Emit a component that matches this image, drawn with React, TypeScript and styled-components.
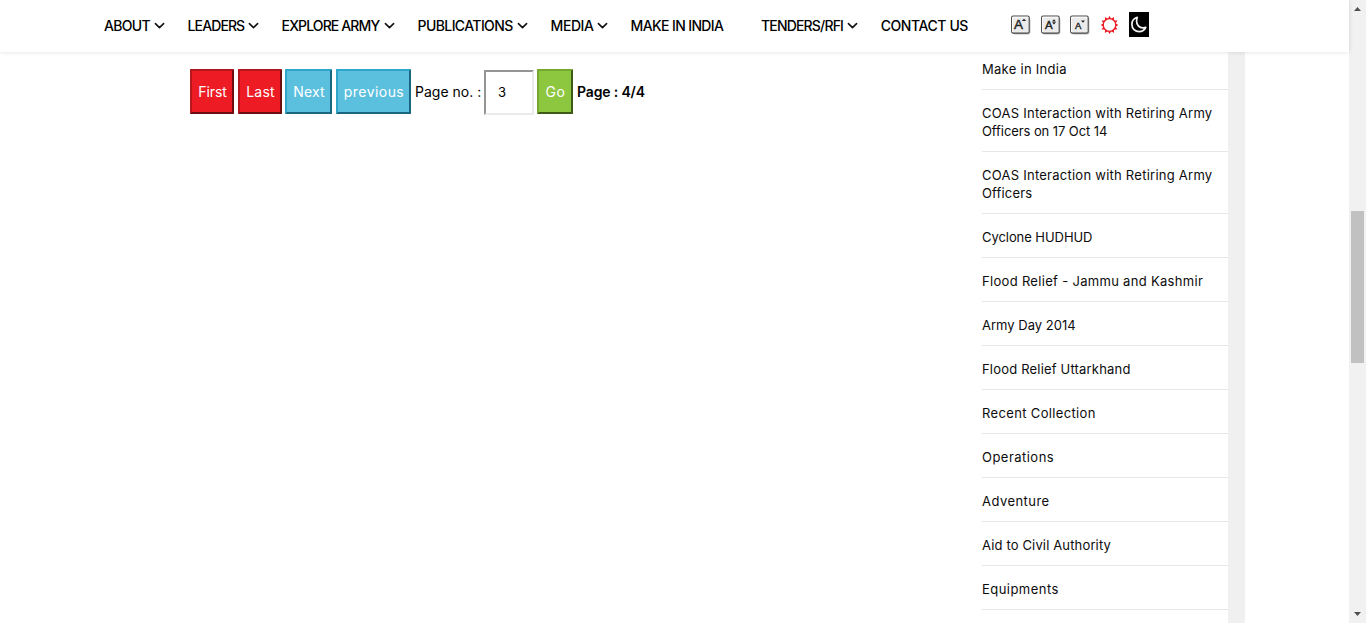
import React from "react";
import styled, { createGlobalStyle } from "styled-components";

const GlobalStyle = createGlobalStyle`
  * { box-sizing: border-box; }
  body { margin: 0; background: #fff; color: #000; font-family: Inter, "Liberation Sans", sans-serif; overflow: hidden; }
`;

const Window = styled.div`
  display: flex;
  height: 623px;
  overflow: hidden;
`;

const Page = styled.div`
  display: flex;
  flex-direction: column;
  width: 1349px;
`;

const Header = styled.header`
  position: relative;
  z-index: 1;
  display: flex;
  align-items: center;
  flex: none;
  height: 52px;
  padding-left: 104px;
  background: #fff;
  box-shadow: 0 0 5px rgba(0, 0, 0, 0.13);
`;

const Nav = styled.nav`
  display: flex;
  width: 907px;
`;

const NavItem = styled.a<{ $slot: number }>`
  display: flex;
  align-items: center;
  flex: none;
  width: ${(p) => p.$slot}px;
  color: #000;
  text-decoration: none;
`;

const NavLabel = styled.span<{ $width: number; $spacing: number }>`
  width: ${(p) => p.$width}px;
  font-size: 14px;
  font-weight: 500;
  line-height: 20px;
  letter-spacing: ${(p) => p.$spacing}px;
  white-space: nowrap;
`;

const Tools = styled.div`
  display: flex;
  align-items: center;
  height: 26px;
  margin-top: -3px;
`;

const ToolSlot = styled.span<{ $slot: number }>`
  display: flex;
  width: ${(p) => p.$slot}px;
`;

const Body = styled.main`
  display: flex;
  flex: 1;
  overflow: hidden;
`;

const Content = styled.section`
  width: 982px;
  padding: 17px 0 0 190px;
`;

const Pager = styled.form`
  display: flex;
  align-items: flex-start;
  font-size: 14px;
  line-height: 20px;
`;

const tones = {
  red: { fill: "#ed1c24", light: "#b5171d", dark: "#6b0d11" },
  blue: { fill: "#5bc0de", light: "#2fa5c9", dark: "#1a6580" },
  green: { fill: "#8dc63f", light: "#76a82f", dark: "#3f5a18" },
};

const PagerButton = styled.button<{ $tone: keyof typeof tones; $width: number; $gap: number; $spacing: number }>`
  width: ${(p) => p.$width}px;
  height: 45px;
  margin: 0 ${(p) => p.$gap}px 0 0;
  padding: 1px 0 0 1px;
  border: 2px solid;
  border-color: ${(p) => `${tones[p.$tone].light} ${tones[p.$tone].dark} ${tones[p.$tone].dark} ${tones[p.$tone].light}`};
  border-radius: 1px;
  background: ${(p) => tones[p.$tone].fill};
  color: #fff;
  font: 400 14px/20px Inter, sans-serif;
  letter-spacing: ${(p) => p.$spacing}px;
  white-space: nowrap;
`;

const PagerLabel = styled.label`
  width: 69px;
  margin-top: 13px;
  white-space: nowrap;
`;

const PageInput = styled.input`
  width: 50px;
  height: 45px;
  margin: 1px 3px 0 0;
  padding: 0 12px 1px;
  border: 2px solid;
  border-color: #949494 #ebebeb #ebebeb #949494;
  border-radius: 0;
  outline: 0;
  font: 400 13px/20px Inter, sans-serif;
`;

const PageCount = styled.strong`
  margin-top: 13px;
  font-weight: 600;
  letter-spacing: -0.15px;
`;

const Sidebar = styled.aside`
  width: 246px;
  margin-top: -6px;
`;

const AlbumLink = styled.a`
  display: block;
  padding: 14px 0 11px;
  border-bottom: 1px solid #e6e6e6;
  color: #0c0c0c;
  font-size: 13px;
  line-height: 18px;
  text-decoration: none;
`;

const AlbumLine = styled.span<{ $spacing: number }>`
  display: block;
  letter-spacing: ${(p) => p.$spacing}px;
  white-space: nowrap;
`;

const Gutter = styled.div`
  width: 17px;
  background: #f0f0f0;
`;

const Scrollbar = styled.div`
  display: flex;
  flex-direction: column;
  align-items: center;
  width: 17px;
  padding-top: 7px;
  background: #f1f1f1;
`;

const Thumb = styled.div`
  width: 13px;
  height: 152px;
  margin: 200px 0 249px;
  background: #c1c1c1;
`;

const Arrow = styled.svg`
  display: block;
  flex: none;
`;

type NavEntry = { label: string; slot: number; width: number; spacing: number; menu?: boolean };

const navEntries: NavEntry[] = [
  { label: "ABOUT", slot: 83.6, width: 50, spacing: -0.7, menu: true },
  { label: "LEADERS", slot: 94, width: 60.4, spacing: -0.9, menu: true },
  { label: "EXPLORE ARMY", slot: 136, width: 102.4, spacing: -0.88, menu: true },
  { label: "PUBLICATIONS", slot: 133, width: 99.4, spacing: -0.6, menu: true },
  { label: "MEDIA", slot: 80, width: 46.4, spacing: -0.45, menu: true },
  { label: "MAKE IN INDIA", slot: 130.4, width: 94, spacing: -0.63 },
  { label: "TENDERS/RFI", slot: 119.7, width: 86, spacing: -0.82, menu: true },
  { label: "CONTACT US", slot: 90, width: 90, spacing: -0.42 },
];

const albums: { text: string; spacing: number }[][] = [
  [{ text: "Make in India", spacing: 0.28 }],
  [{ text: "COAS Interaction with Retiring Army", spacing: 0.25 }, { text: "Officers on 17 Oct 14", spacing: -0.08 }],
  [{ text: "COAS Interaction with Retiring Army", spacing: 0.25 }, { text: "Officers", spacing: 0.16 }],
  [{ text: "Cyclone HUDHUD", spacing: -0.06 }],
  [{ text: "Flood Relief - Jammu and Kashmir", spacing: 0.31 }],
  [{ text: "Army Day 2014", spacing: 0.02 }],
  [{ text: "Flood Relief Uttarkhand", spacing: 0.19 }],
  [{ text: "Recent Collection", spacing: 0.35 }],
  [{ text: "Operations", spacing: 0.47 }],
  [{ text: "Adventure", spacing: 0.46 }],
  [{ text: "Aid to Civil Authority", spacing: 0.15 }],
  [{ text: "Equipments", spacing: 0.46 }],
];

const Chevron = () => (
  <svg width="11" height="8" viewBox="0 0 11 8">
    <path d="M1.4 1.6 5.5 5.6 9.6 1.6" fill="none" stroke="#111" strokeWidth="1.6" strokeLinecap="round" strokeLinejoin="round" />
  </svg>
);

type FontSizeIconProps = { size: number; x: number; base: number; mark: string };

const FontSizeIcon = ({ size, x, base, mark }: FontSizeIconProps) => (
  <svg width="20" height="20" viewBox="0 0 20 20">
    <rect x="1.800" y="2.500" width="17.600" height="17" rx="2" fill="#bbb" />
    <rect x="0.6" y="1.100" width="17.600" height="17" rx="1.500" fill="#ebebeb" stroke="#4a4a4a" strokeWidth="1.100" />
    <path d="M1.600 17V2.100H17.200" fill="none" stroke="#fff" strokeWidth="1" />
    <text x={x} y={base} textAnchor="middle" fontFamily="Liberation Sans, sans-serif" fontSize={size} stroke="#222" strokeWidth="0.4" fill="#222">A</text>
    <path d={mark} fill="#222" />
  </svg>
);

const sunPoints = Array.from({ length: 12 }, (_, i) => {
  const at = (deg: number, r: number) => {
    const a = ((deg - 90) * Math.PI) / 180;
    return `${(9 + r * Math.cos(a)).toFixed(2)} ${(9 + r * Math.sin(a)).toFixed(2)}`;
  };
  return `M${at(i * 30 - 14, 6.4)}L${at(i * 30, 9.2)}L${at(i * 30 + 14, 6.4)}Z`;
}).join("");

const SunIcon = () => (
  <svg width="17" height="18" viewBox="0.5 0 17 18">
    <circle cx="9" cy="9" r="6.300" fill="none" stroke="#ed1c24" strokeWidth="1.300" />
    <path d={sunPoints} fill="#ed1c24" />
  </svg>
);

const MoonIcon = () => (
  <svg width="20" height="25" viewBox="0 0 20 25">
    <rect width="20" height="25" fill="#000" />
    <path d="M8.200 5.300C5 6.300 2.900 9 2.900 12.400c0 4.100 3.200 7.200 7.200 7.200 3 0 5.500-1.600 6.700-4.200-1 .4-2 .6-3 .5-3.600-.2-6.300-3.100-6.200-6.600 0-1.500.2-2.800.6-4Z" fill="none" stroke="#f4f4f4" strokeWidth="1.700" strokeLinejoin="round" />
  </svg>
);

export default function App() {
  return (
    <Window>
      <GlobalStyle />
      <Page>
        <Header>
          <Nav>
            {navEntries.map((n) => (
              <NavItem key={n.label} $slot={n.slot}>
                <NavLabel $width={n.width} $spacing={n.spacing}>{n.label}</NavLabel>
                {n.menu && <Chevron />}
              </NavItem>
            ))}
          </Nav>
          <Tools>
            <ToolSlot $slot={30}><FontSizeIcon size={13.5} x={7.6} base={14} mark="M10.800 6 13 3.800 15.200 6Z" /></ToolSlot>
            <ToolSlot $slot={29}><FontSizeIcon size={11.5} x={7.8} base={14} mark="M11 6.400 13 4.200 15 6.400ZM11 7.300 13 9.500 15 7.300Z" /></ToolSlot>
            <ToolSlot $slot={31}><FontSizeIcon size={9.5} x={8.2} base={13.6} mark="M11 5.600 13 7.800 15 5.600Z" /></ToolSlot>
            <ToolSlot $slot={28}><SunIcon /></ToolSlot>
            <MoonIcon />
          </Tools>
        </Header>
        <Body>
          <Content>
            <Pager onSubmit={(e) => e.preventDefault()}>
              <PagerButton type="button" $tone="red" $width={44} $gap={4} $spacing={-0.1}>First</PagerButton>
              <PagerButton type="button" $tone="red" $width={44} $gap={3} $spacing={0.2}>Last</PagerButton>
              <PagerButton type="button" $tone="blue" $width={47} $gap={4} $spacing={0.15}>Next</PagerButton>
              <PagerButton type="button" $tone="blue" $width={75} $gap={4} $spacing={0.45}>previous</PagerButton>
              <PagerLabel htmlFor="page">Page no. :</PagerLabel>
              <PageInput id="page" defaultValue="3" />
              <PagerButton type="submit" $tone="green" $width={36} $gap={4} $spacing={0.6}>Go</PagerButton>
              <PageCount>Page : 4/4</PageCount>
            </Pager>
          </Content>
          <Sidebar>
            {albums.map((lines, i) => (
              <AlbumLink key={i}>
                {lines.map((l) => (
                  <AlbumLine key={l.text} $spacing={l.spacing}>{l.text}</AlbumLine>
                ))}
              </AlbumLink>
            ))}
          </Sidebar>
          <Gutter />
        </Body>
      </Page>
      <Scrollbar>
        <Arrow width="7" height="4" viewBox="0 0 7 4"><path d="M0 4 3.500 0 7 4Z" fill="#505050" /></Arrow>
        <Thumb />
        <Arrow width="7" height="4" viewBox="0 0 7 4"><path d="M0 0 3.500 4 7 0Z" fill="#505050" /></Arrow>
      </Scrollbar>
    </Window>
  );
}
